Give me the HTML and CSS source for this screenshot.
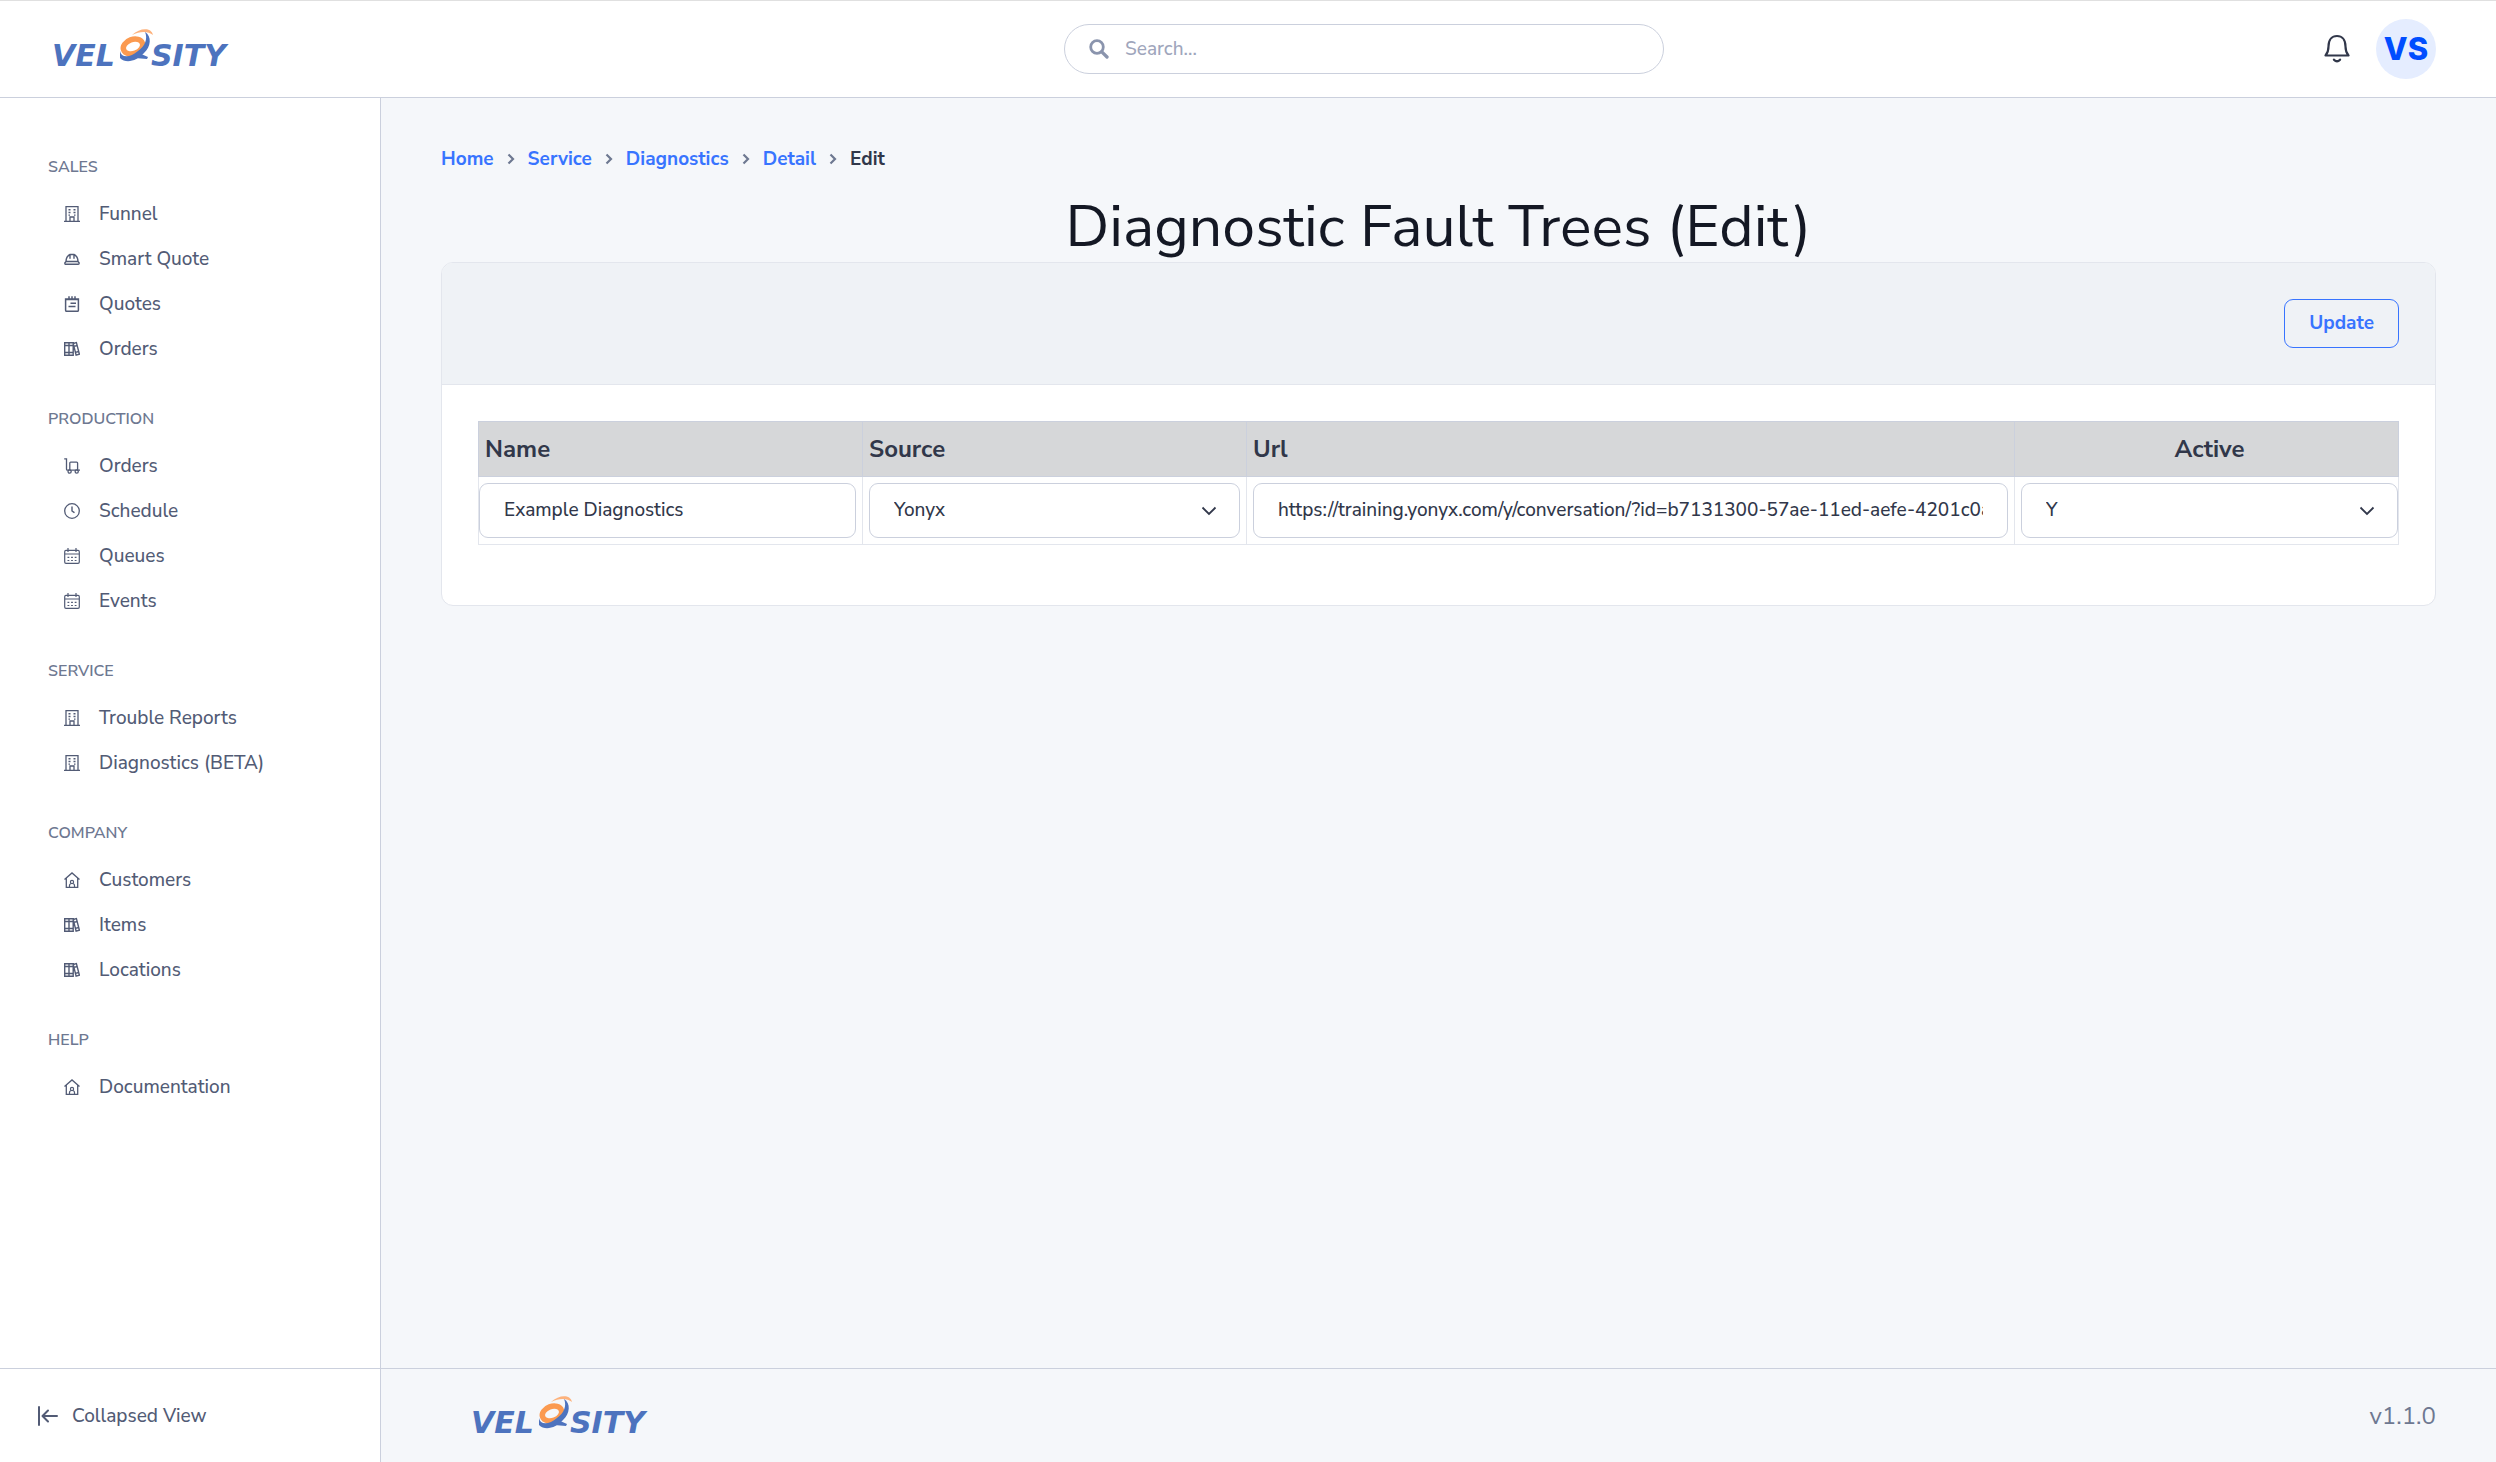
FILE: index.html
```html
<!DOCTYPE html>
<html lang="en">
<head>
<meta charset="utf-8">
<title>Diagnostic Fault Trees (Edit)</title>
<meta name="viewport" content="width=device-width, initial-scale=1">
<link rel="stylesheet" href="styles.css">
</head>
<body>
<svg class="sprite" aria-hidden="true">
  <symbol id="building" viewBox="0 0 16 16"><path d="M2 15.300V.700h12v14.600M0 15.300h16M6 15v-4h4v4" fill="none" stroke="currentColor" stroke-width="1.300"/><path d="M4.500 3h2v1.400h-2zM9.500 3h2v1.400h-2zM4.500 5.800h2v1.400h-2zM9.500 5.800h2v1.400h-2zM4.500 8.600h1.500v1.200H4.500zM10 8.600h1.500v1.200H10z" fill="currentColor"/></symbol>
  <symbol id="hat" viewBox="0 0 16 16"><path d="M2 10.500q.200-5.500 4-7h4q3.800 1.500 4 7M6 3.500v3.700M10 3.500v3.700M2 10.500h12l1.200 1.500q0 1.300-1 1.300H1.800q-1 0-1-1.300z" fill="none" stroke="currentColor" stroke-width="1.400" stroke-linecap="round" stroke-linejoin="round"/></symbol>
  <symbol id="notes" viewBox="0 0 16 16"><path d="M1.600 3h12.800v11.300q0 1-1 1H2.600q-1 0-1-1zM5 .300v3.500M8 .300v3.500M11 .300v3.500M2 3.600h12M6.500 7.200H12M4.500 10.500h7" fill="none" stroke="currentColor" stroke-width="1.500"/></symbol>
  <symbol id="books" viewBox="0 0 16 16"><path d="M.700 1.700h8.500v12.600H.700zM5 1.700v12.600M.700 4.500h8.500M.700 11.500h8.500M9.200 2.500l3.200-.900 3 11.700-3.300.900zM10 5.400l3.200-.900M11.500 11.400l3.300-.900" fill="none" stroke="currentColor" stroke-width="1.400"/></symbol>
  <symbol id="cart" viewBox="0 0 16 16"><path d="M.200.900h2.300v10.300q0 1 1 1H16M5.800 5.100q0-.900.900-.900h6q.900 0 .900.900v7H5.800z" fill="none" stroke="currentColor" stroke-width="1.300"/><g fill="#fff" stroke="currentColor" stroke-width="1.300"><circle cx="5.600" cy="13.600" r="1.600"/><circle cx="12.700" cy="13.600" r="1.600"/></g></symbol>
  <symbol id="clock" viewBox="0 0 16 16"><circle cx="8" cy="8" r="7.300" fill="none" stroke="currentColor" stroke-width="1.300"/><path d="M8 4v4l2 1.400" fill="none" stroke="currentColor" stroke-width="1.400" stroke-linecap="round"/></symbol>
  <symbol id="calendar" viewBox="0 0 16 16"><path d="M.700 3.700q0-1.300 1.300-1.300h12q1.300 0 1.300 1.300V14q0 1.300-1.300 1.300H2Q.700 15.300.700 14zM.700 6h14.600M4 0v4M12 0v4" fill="none" stroke="currentColor" stroke-width="1.200"/><path d="M3.500 9.300h9M3.500 12.500h9" fill="none" stroke="currentColor" stroke-width="1.200" stroke-dasharray="1.800 1.800"/></symbol>
  <symbol id="home" viewBox="0 0 16 16"><path d="M.500 7.600 8 .900l7.500 6.700M2.300 6.300v9h11.400v-9" fill="none" stroke="currentColor" stroke-width="1.300"/><path d="M5.500 15v-1.600q0-1.900 2.500-1.900t2.500 1.900V15" fill="none" stroke="currentColor" stroke-width="1.200"/><circle cx="8" cy="9.900" r="1.600" fill="none" stroke="currentColor" stroke-width="1.200"/></symbol>
  <symbol id="chevron-right" viewBox="0 0 8 12"><path d="M1.500 1.500 6 6l-4.500 4.500" fill="none" stroke="currentColor" stroke-width="2.200"/></symbol>
  <symbol id="chevron-down" viewBox="0 0 16 10"><path d="M1.500 1.500 8 8l6.500-6.500" fill="none" stroke="currentColor" stroke-width="1.800"/></symbol>
  <symbol id="swirl" viewBox="0 0 188 48">
    <g transform="translate(0 4)">
      <ellipse cx="85" cy="17.500" rx="10" ry="7" transform="rotate(-20 85 17.500)" fill="none" stroke="#fb9a50" stroke-width="5.500"/>
      <path d="M84 6c8-7 19-8 21 0-5-4-13-4-21 0z" fill="#fdb27c"/>
      <path d="M97 3c7 4 6 15-1 21-7 8-18 11-24 5v-7c1 7 10 7 18 0 7-5 10-12 7-19z" fill="#4d73be"/>
      <path d="M91 24l9 4-1 2-12-1z" fill="#4d73be"/>
    </g>
  </symbol>
</svg>

<header class="topbar">
  <a class="brand" href="#" aria-label="Velosity"><svg class="logo" viewBox="0 0 188 48"><text x="4" y="41">VEL</text><text x="103" y="41">SITY</text><use href="#swirl"/></svg></a>
  <form class="search">
    <svg viewBox="0 0 20 20" aria-hidden="true"><circle cx="8" cy="8" r="6.300" fill="none" stroke="currentColor" stroke-width="2.800"/><path d="m12.800 12.800 5.200 5.200" stroke="currentColor" stroke-width="3.300" stroke-linecap="round"/></svg>
    <input type="search" placeholder="Search..." aria-label="Search">
  </form>
  <div class="tools">
    <button class="bell" type="button" aria-label="Notifications"><svg viewBox="0 0 26 30"><path d="M1.500 21.500q3-3.500 3-9C4.500 5.500 8 2 13 2s8.500 3.500 8.500 10.500q0 5.500 3 9z" fill="none" stroke="currentColor" stroke-width="2.200" stroke-linejoin="round"/><path d="M10 25.700q3 3.200 6 0" fill="none" stroke="currentColor" stroke-width="2.400" stroke-linecap="round"/></svg></button>
    <button class="avatar" type="button">VS</button>
  </div>
</header>

<div class="shell">
  <aside class="sidebar">
    <nav class="nav">
      <section><h2>SALES</h2><ul>
        <li><a href="#"><svg><use href="#building"/></svg>Funnel</a></li>
        <li><a href="#"><svg><use href="#hat"/></svg>Smart Quote</a></li>
        <li><a href="#"><svg><use href="#notes"/></svg>Quotes</a></li>
        <li><a href="#"><svg><use href="#books"/></svg>Orders</a></li></ul></section>
      <section><h2>PRODUCTION</h2><ul>
        <li><a href="#"><svg><use href="#cart"/></svg>Orders</a></li>
        <li><a href="#"><svg><use href="#clock"/></svg>Schedule</a></li>
        <li><a href="#"><svg><use href="#calendar"/></svg>Queues</a></li>
        <li><a href="#"><svg><use href="#calendar"/></svg>Events</a></li></ul></section>
      <section><h2>SERVICE</h2><ul>
        <li><a href="#"><svg><use href="#building"/></svg>Trouble Reports</a></li>
        <li><a href="#"><svg><use href="#building"/></svg>Diagnostics (BETA)</a></li></ul></section>
      <section><h2>COMPANY</h2><ul>
        <li><a href="#"><svg><use href="#home"/></svg>Customers</a></li>
        <li><a href="#"><svg><use href="#books"/></svg>Items</a></li>
        <li><a href="#"><svg><use href="#books"/></svg>Locations</a></li></ul></section>
      <section><h2>HELP</h2><ul>
        <li><a href="#"><svg><use href="#home"/></svg>Documentation</a></li></ul></section>
    </nav>
    <button class="collapse" type="button"><svg viewBox="0 0 22 20"><path d="M2 1v18M20 10H6M11 4.500 5.500 10l5.500 5.500" fill="none" stroke="currentColor" stroke-width="2" stroke-linecap="round" stroke-linejoin="round"/></svg>Collapsed View</button>
  </aside>

  <div class="page">
    <main class="content">
      <nav aria-label="Breadcrumb"><ol class="crumbs">
        <li><a href="#">Home</a></li>
        <li><svg><use href="#chevron-right"/></svg><a href="#">Service</a></li>
        <li><svg><use href="#chevron-right"/></svg><a href="#">Diagnostics</a></li>
        <li><svg><use href="#chevron-right"/></svg><a href="#">Detail</a></li>
        <li><svg><use href="#chevron-right"/></svg><span aria-current="page">Edit</span></li>
      </ol></nav>
      <h1>Diagnostic Fault Trees (Edit)</h1>
      <form class="card">
        <div class="card-head"><button class="update" type="button">Update</button></div>
        <div class="card-body">
          <table>
            <colgroup><col class="narrow"><col class="narrow"><col class="wide"><col class="narrow"></colgroup>
            <thead><tr><th scope="col" id="h-name">Name</th><th scope="col" id="h-source">Source</th><th scope="col" id="h-url">Url</th><th scope="col" id="h-active" class="center">Active</th></tr></thead>
            <tbody><tr>
              <td><input class="field" type="text" value="Example Diagnostics" aria-labelledby="h-name"></td>
              <td><div class="pick"><select class="field" aria-labelledby="h-source"><option>Yonyx</option></select><svg><use href="#chevron-down"/></svg></div></td>
              <td><input class="field" type="text" value="https://training.yonyx.com/y/conversation/?id=b7131300-57ae-11ed-aefe-4201c0a80002" aria-labelledby="h-url"></td>
              <td><div class="pick"><select class="field" aria-labelledby="h-active"><option>Y</option><option>N</option></select><svg><use href="#chevron-down"/></svg></div></td>
            </tr></tbody>
          </table>
        </div>
      </form>
    </main>
    <footer class="footer"><svg class="logo" viewBox="0 0 188 48" role="img" aria-label="Velosity"><text x="4" y="41">VEL</text><text x="103" y="41">SITY</text><use href="#swirl"/></svg><span>v1.1.0</span></footer>
  </div>
</div>
</body>
</html>
```
FILE: styles.css
```css
* { box-sizing: border-box; }
body {
  margin: 0;
  min-height: 100vh;
  display: flex;
  flex-direction: column;
  background: #f5f7fa;
  color: #31374a;
  font: 500 19px/30px "Nunito Sans", "Open Sans", sans-serif;
}
a { color: inherit; text-decoration: none; }
button, input, select { font: inherit; color: inherit; }
button { padding: 0; border: 0; background: none; cursor: pointer; }
ul, ol { margin: 0; padding: 0; list-style: none; }
svg { flex: none; }
.sprite { position: absolute; width: 0; height: 0; }
.logo {
  display: block;
  width: 188px;
  height: 48px;
  overflow: visible;
  fill: #4d73be;
  font: italic 700 30px "DejaVu Sans", sans-serif;
}

.topbar {
  display: grid;
  grid-template-columns: 244px 1fr 600px 1fr;
  align-items: center;
  height: 98px;
  padding: 0 60px 0 48px;
  border-top: 1px solid #e0e0e0;
  border-bottom: 1px solid #cbd0dd;
  background: #fff;
}
.search {
  grid-column: 3;
  display: flex;
  align-items: center;
  gap: 16px;
  height: 50px;
  padding: 0 24px;
  border: 1px solid #cbd0dd;
  border-radius: 25px;
  color: #8a94ad;
}
.search svg { width: 20px; height: 20px; }
.search input { flex: 1; min-width: 0; padding: 0; border: 0; outline: 0; background: none; }
.search input::placeholder { color: #9fa6bc; opacity: 1; }
.tools { display: flex; justify-content: flex-end; align-items: center; gap: 26px; }
.bell { width: 26px; height: 30px; }
.bell svg { display: block; width: 26px; height: 30px; }
.avatar {
  width: 60px;
  height: 60px;
  border-radius: 50%;
  background: #e5edff;
  color: #004dff;
  font: 800 31px/60px Inter, sans-serif;
}

.shell { flex: 1; display: flex; }
.sidebar {
  flex: none;
  display: flex;
  flex-direction: column;
  width: 381px;
  border-right: 1px solid #cbd0dd;
  background: #fff;
  color: #525b75;
}
.nav { flex: 1; padding: 57px 48px 0; }
.nav section { padding-bottom: 36px; }
.nav h2 { margin: 0 0 12px; font-size: 16px; line-height: 24px; font-weight: 600; color: #6e7891; }
.nav a { display: flex; align-items: center; gap: 19px; height: 45px; padding-left: 16px; }
.nav svg { width: 16px; height: 16px; }
.collapse {
  display: flex;
  align-items: center;
  gap: 13px;
  height: 94px;
  padding-left: 37px;
  border-top: 1px solid #cbd0dd;
}
.collapse svg { width: 22px; height: 20px; }

.page { flex: 1; min-width: 0; display: flex; flex-direction: column; }
.content { flex: 1; padding: 46px 60px; }
.crumbs { display: flex; font-weight: 700; color: #31374a; }
.crumbs li { display: flex; align-items: center; }
.crumbs a { color: #3874ff; }
.crumbs svg { width: 8px; height: 12px; margin: 0 13px; color: #6e7891; }
h1 { margin: 18px 0 0; font-size: 59px; line-height: 70px; font-weight: 400; text-align: center; color: #141824; }

.card { border: 1px solid #e3e6ed; border-radius: 12px; background: #fff; overflow: hidden; }
.card-head { display: flex; justify-content: flex-end; padding: 36px; border-bottom: 1px solid #e3e6ed; background: #eff2f6; }
.update { height: 49px; padding: 0 24px 2px; border: 1px solid #3874ff; border-radius: 9px; color: #3874ff; font-weight: 700; }
.card-body { padding: 36px 36px 60px; }
table { width: 100%; table-layout: fixed; border-collapse: collapse; }
.narrow { width: 20%; }
.wide { width: 40%; }
th { height: 55px; padding: 0 6px; border: 1px solid #cbd0dd; background: #d6d7d9; font-size: 24px; font-weight: 700; text-align: left; }
th.center { padding-right: 0; text-align: center; }
td { padding: 6px; border: 1px solid #e3e6ed; }
td:first-child { padding-left: 0; }
td:last-child { padding-right: 0; }
.field {
  display: block;
  width: 100%;
  height: 55px;
  padding: 0 24px 2px;
  border: 1px solid #cbd0dd;
  border-radius: 9px;
  background: #fff;
  appearance: none;
}
.pick { display: grid; align-items: center; }
.pick > * { grid-area: 1 / 1; }
.pick svg { justify-self: end; width: 16px; height: 10px; margin-right: 23px; pointer-events: none; }

.footer {
  display: flex;
  justify-content: space-between;
  align-items: center;
  height: 94px;
  padding: 0 60px 0 86px;
  border-top: 1px solid #cbd0dd;
  color: #6e7891;
  font-size: 24px;
  font-weight: 400;
}
```
